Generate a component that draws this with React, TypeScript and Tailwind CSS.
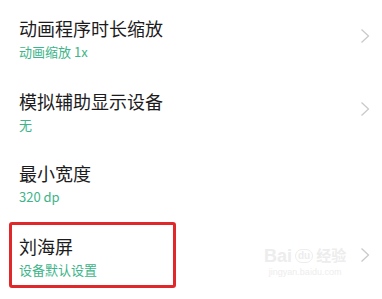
const rows = [
  { title: '动画程序时长缩放', value: '动画缩放 1x', arrow: true },
  { title: '模拟辅助显示设备', value: '无', arrow: true },
  { title: '最小宽度', value: '320 dp', arrow: false },
  { title: '刘海屏', value: '设备默认设置', arrow: true, marked: true },
];

function Chevron() {
  return (
    <svg width="10" height="16" viewBox="0 0 10 16" className="mt-[28px] shrink-0">
      <polyline points="1.5,1.5 8.5,8 1.5,14.5" fill="none" stroke="#cacaca" strokeWidth="1.3" />
    </svg>
  );
}

export default function App() {
  return (
    <div
      className="relative h-[299px] w-[382px] overflow-hidden bg-white"
      style={{ fontFamily: '"Noto Sans CJK SC", "Noto Sans", sans-serif' }}
    >
      {rows.map((row, i) => (
        <div key={i} className="relative flex h-[73px] items-start justify-between pl-[19px] pr-[12px]">
          <div className={i < 2 ? 'pt-[16px]' : 'pt-[15px]'}>
            <div className="text-[18px] leading-[24px] text-[#1c1c1c]">{row.title}</div>
            <div className="mt-[3px] text-[13px] leading-[18px] text-[#3db489]">{row.value}</div>
          </div>
          {row.arrow && <Chevron />}
          {row.marked && (
            <div className="absolute left-[9px] top-[3px] h-[66px] w-[167px] rounded-[3px] border-[3px] border-[#e0282a]" />
          )}
        </div>
      ))}

      {/* faint site watermark */}
      <div className="pointer-events-none absolute left-[264px] top-[246px] flex flex-col items-center text-[#ededed]">
        <div className="flex items-center gap-[3px] text-[18px] font-bold leading-[20px]" style={{ fontFamily: '"Liberation Sans", "Noto Sans CJK SC", sans-serif' }}>
          <span>Bai</span>
          <span className="rounded-full border border-[#ededed] px-[2px] text-[10px] leading-[12px]">du</span>
          <span className="text-[15px]">经验</span>
        </div>
        <div className="text-[9px] leading-[12px]" style={{ fontFamily: '"Liberation Sans", sans-serif' }}>jingyan.baidu.com</div>
      </div>
    </div>
  );
}
